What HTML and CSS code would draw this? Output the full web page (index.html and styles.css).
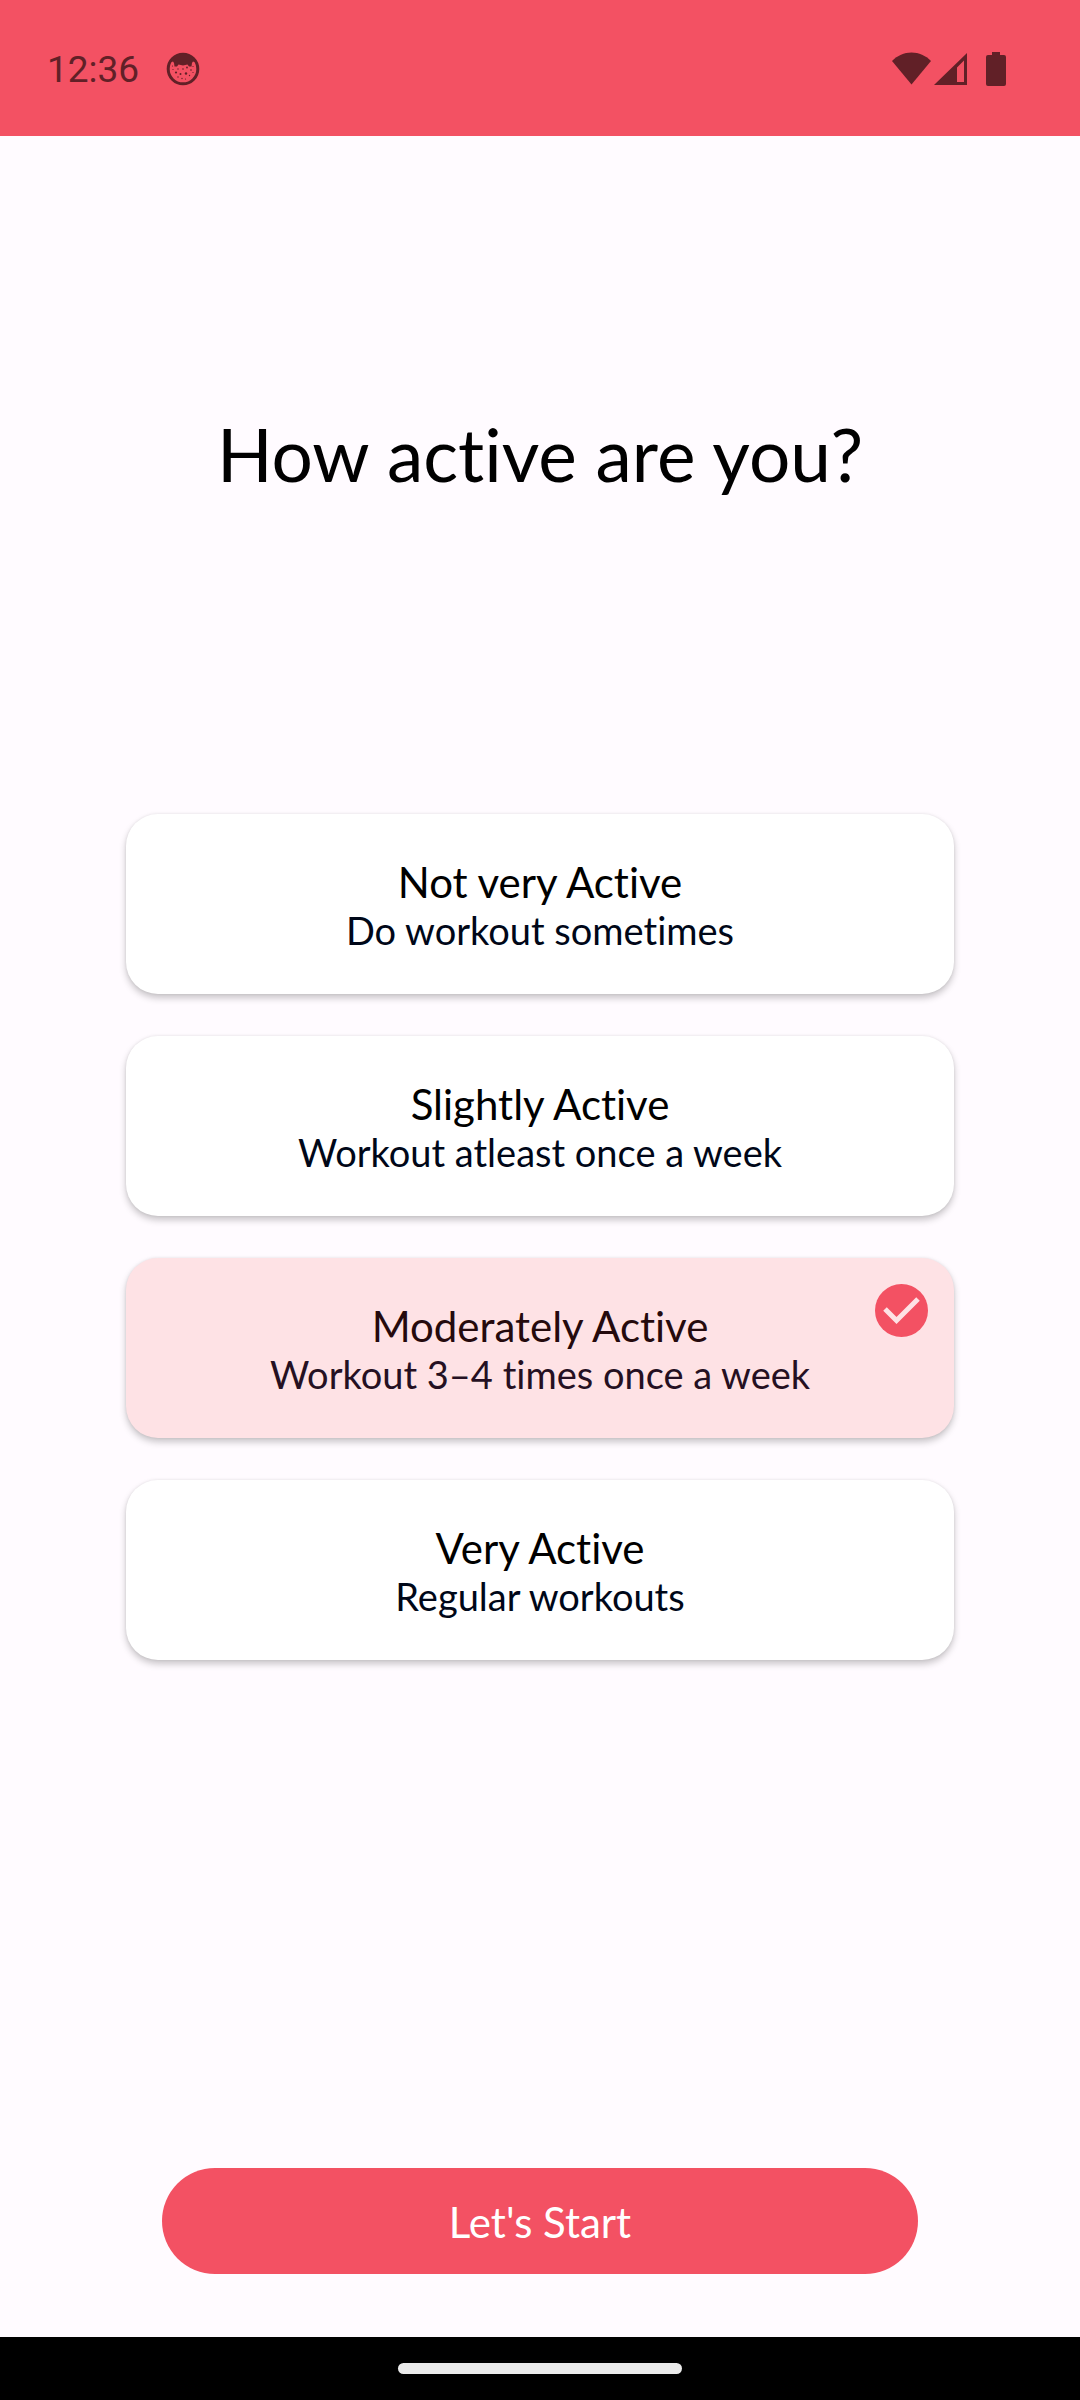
FILE: index.html
```html
<!DOCTYPE html>
<html lang="en">
<head>
<meta charset="utf-8">
<meta name="viewport" content="width=device-width, initial-scale=1">
<title>Activity level</title>
<link rel="stylesheet" href="styles.css">
</head>
<body>
<header class="status-bar">
  <span class="clock">12:36</span>
  <svg class="icon" width="34" height="34" viewBox="0 0 34 34" aria-hidden="true">
    <circle cx="17" cy="17" r="14.8" fill="none" stroke="currentColor" stroke-width="3"/>
    <path d="M4 10.500C6 5 11 1.500 17 1.500S28 5 30 10.500L27 9.500L26 11L25.500 14.500L23 14.500L21.500 12.500L17 13.500L12.500 12.500L11 14.500H8.500L8 11L7 9.500Z" fill="currentColor"/>
    <g fill="currentColor">
      <circle cx="10" cy="20.500" r="1.100"/><circle cx="14.500" cy="22" r="1"/><circle cx="20" cy="21.500" r="1.200"/>
      <circle cx="17" cy="17" r=".8"/><circle cx="21" cy="15.500" r=".9"/><circle cx="25" cy="18" r=".8"/>
      <circle cx="7" cy="17.500" r=".6"/><circle cx="12" cy="17" r=".7"/><circle cx="23.500" cy="23.500" r=".7"/>
      <circle cx="12" cy="25" r=".7"/><circle cx="16" cy="26.500" r=".7"/><circle cx="19.500" cy="27" r=".6"/>
      <circle cx="27" cy="20.500" r=".6"/><circle cx="6.500" cy="14" r=".6"/><circle cx="27" cy="14.500" r=".6"/>
    </g>
  </svg>
  <div class="indicators">
    <svg class="icon" width="39" height="34" viewBox="0 0 39 34" aria-hidden="true">
      <path d="M0 9C5.500 3.500 12 .500 19.500.500S33.500 3.500 39 9L19.500 32.500Z" fill="currentColor"/>
    </svg>
    <svg class="icon" width="33" height="34" viewBox="0 0 33 34" aria-hidden="true">
      <path d="M33 1V33H0ZM30 8.500L23 15.500V30H30Z" fill="currentColor" fill-rule="evenodd"/>
    </svg>
    <svg class="icon battery" width="20" height="34" viewBox="0 0 20 34" aria-hidden="true">
      <path d="M6 0H14V3H18Q20 3 20 5V32Q20 34 18 34H2Q0 34 0 32V5Q0 3 2 3H6Z" fill="currentColor"/>
    </svg>
  </div>
</header>
<main class="screen">
  <h1 class="title" id="question">How active are you?</h1>
  <form class="form">
    <div class="options" role="radiogroup" aria-labelledby="question">
      <label class="option">
        <input class="option-input" type="radio" name="activity" value="none">
        <span class="option-name">Not very Active</span>
        <span class="option-note">Do workout sometimes</span>
      </label>
      <label class="option">
        <input class="option-input" type="radio" name="activity" value="slight">
        <span class="option-name">Slightly Active</span>
        <span class="option-note">Workout atleast once a week</span>
      </label>
      <label class="option">
        <input class="option-input" type="radio" name="activity" value="moderate" checked>
        <span class="option-name">Moderately Active</span>
        <span class="option-note">Workout 3–4 times once a week</span>
      </label>
      <label class="option">
        <input class="option-input" type="radio" name="activity" value="very">
        <span class="option-name">Very Active</span>
        <span class="option-note">Regular workouts</span>
      </label>
    </div>
    <button class="start" type="button">Let's Start</button>
  </form>
</main>
<footer class="nav-bar"><div class="home-handle"></div></footer>
</body>
</html>
```
FILE: styles.css
```css
* {
  box-sizing: border-box;
}

body {
  margin: 0;
  min-height: 100vh;
  display: flex;
  flex-direction: column;
  background: #fffbff;
  color: #000;
  font-family: Lato, sans-serif;
  font-variant-ligatures: none;
}

.status-bar {
  display: flex;
  align-items: center;
  height: 136px;
  padding: 2px 74px 0 47px;
  background: #f35163;
  color: #612027;
}

.clock {
  margin-right: 27px;
  padding-top: 2px;
  font: 37px/44px Roboto, sans-serif;
}

.icon {
  display: block;
}

.indicators {
  display: flex;
  gap: 3px;
  margin-left: auto;
}

.battery {
  margin-left: 16px;
}

.screen {
  flex: 1;
  display: flex;
  flex-direction: column;
  padding: 270px 126px 63px;
}

.title {
  margin: 0 0 312px;
  font-size: 73px;
  font-weight: 400;
  line-height: 96px;
  text-align: center;
}

.form {
  flex: 1;
  display: flex;
  flex-direction: column;
}

.options {
  display: grid;
  gap: 42px;
  margin-bottom: 42px;
}

.option {
  position: relative;
  display: flex;
  flex-direction: column;
  padding: 44px 32px 40px;
  border-radius: 32px;
  background: #fff;
  box-shadow: 0 4px 7px rgba(0, 0, 0, 0.22), 0 0 3px rgba(0, 0, 0, 0.08);
  line-height: 48px;
  text-align: center;
  cursor: pointer;
}

.option-name {
  font-size: 42px;
}

.option-note {
  color: #000718;
  font-size: 38px;
}

.option:has(:checked) {
  background: #fee2e5;
}

.option:has(:checked) .option-name {
  color: #250a0d;
}

.option:has(:checked) .option-note {
  color: #251022;
}

.option-input {
  appearance: none;
  position: absolute;
  top: 26px;
  right: 26px;
  width: 53px;
  height: 53px;
  margin: 0;
  border-radius: 50%;
}

.option-input:checked {
  background: #f35163 url("data:image/svg+xml,%3Csvg xmlns='http://www.w3.org/2000/svg' viewBox='0 0 53 53'%3E%3Cpath d='M10 25L21.500 36.500L43 15' fill='none' stroke='%23fee2e5' stroke-width='5'/%3E%3C/svg%3E") center / 100%;
}

.start {
  margin: auto 36px 0;
  padding: 30px 32px 28px;
  border: 0;
  border-radius: 53px;
  background: #f35163;
  color: #fff;
  font: 42px/48px Lato, sans-serif;
  cursor: pointer;
}

.nav-bar {
  display: flex;
  align-items: center;
  justify-content: center;
  height: 63px;
  background: #000;
}

.home-handle {
  width: 284px;
  height: 11px;
  border-radius: 6px;
  background: #ebebeb;
}
```
